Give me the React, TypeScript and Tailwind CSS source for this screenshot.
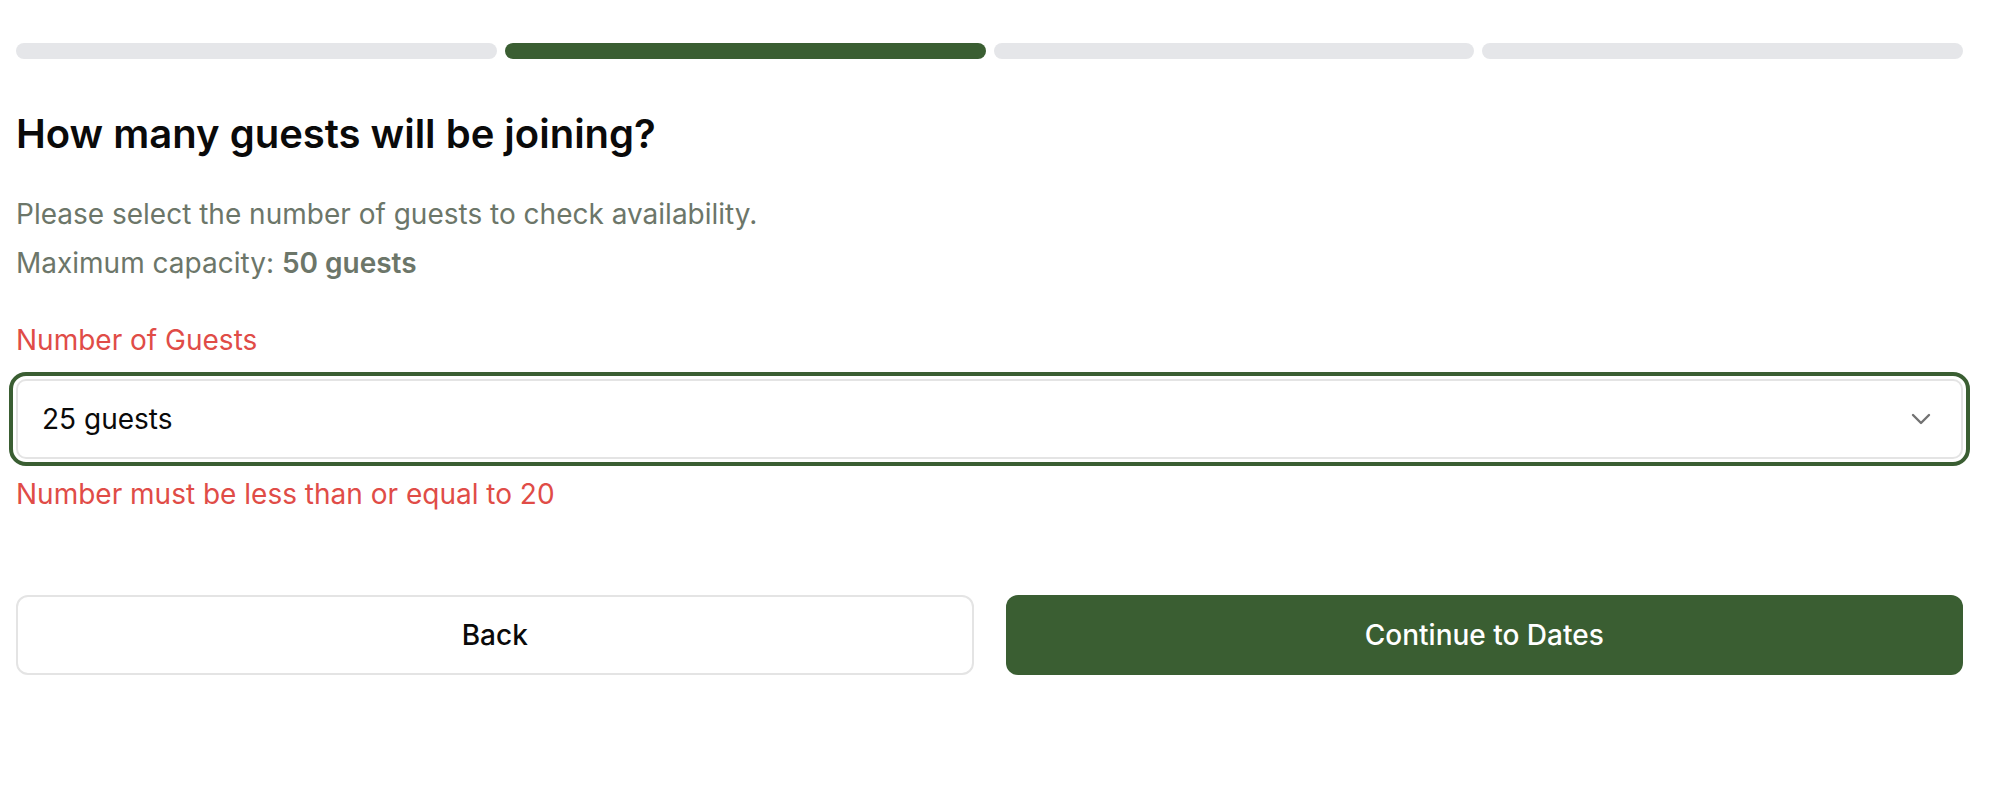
import { ChevronDown } from "lucide-react"

const steps = [false, true, false, false]

export default function App() {
  return (
    <div className="min-h-screen bg-white pl-4 pr-[35px] pt-[43px] font-['Inter',sans-serif]">
      <div className="grid grid-cols-4 gap-2">
        {steps.map((active, i) => (
          <div key={i} className={`h-4 rounded-full ${active ? "bg-[#3a5e32]" : "bg-[#e5e6e9]"}`} />
        ))}
      </div>

      <h1 className="mt-[51px] text-[40px] font-semibold leading-[48px] text-[#0a0a0a]">
        How many guests will be joining?
      </h1>

      <div className="mt-[32px] text-[28px] leading-[49px] text-[#6c7669]">
        <p>Please select the number of guests to check availability.</p>
        <p>
          Maximum capacity: <span className="font-semibold">50 guests</span>
        </p>
      </div>

      <label className="mt-[34px] block text-[28px] leading-[36px] text-[#e04c47]">Number of Guests</label>

      <div className="mt-[21px] flex h-[80px] items-center justify-between rounded-[10px] border-2 border-[#e4e4e4] pl-[24px] pr-[24px] outline-4 outline-offset-[3px] outline-[#3a5e32]">
        <span className="text-[28px] text-[#0a0a0a]">25 guests</span>
        <ChevronDown size={32} strokeWidth={1.8} className="text-[#727272]" />
      </div>

      <p className="mt-[17px] text-[28px] leading-[36px] text-[#e04c47]">Number must be less than or equal to 20</p>

      <div className="mt-[83px] grid grid-cols-2 gap-8">
        <button className="h-[80px] rounded-[12px] border-2 border-[#e4e4e4] bg-white text-[28px] font-medium text-[#0a0a0a]">
          Back
        </button>
        <button className="h-[80px] rounded-[12px] bg-[#3a5e32] text-[28px] font-medium text-white">
          Continue to Dates
        </button>
      </div>
    </div>
  )
}
